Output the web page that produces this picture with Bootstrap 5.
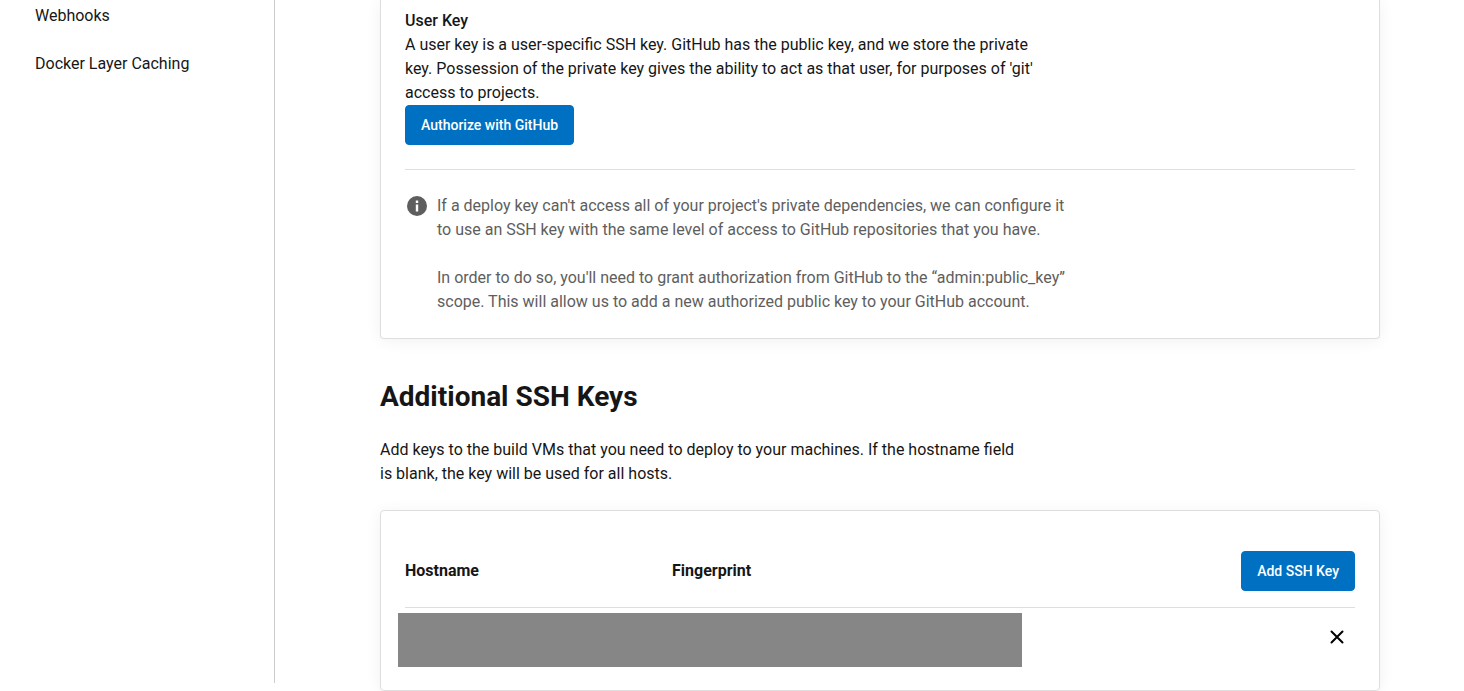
<!DOCTYPE html>
<html lang="en">
<head>
<meta charset="utf-8">
<meta name="viewport" content="width=device-width, initial-scale=1">
<title>Project Settings - SSH Keys</title>
<link href="https://cdn.jsdelivr.net/npm/bootstrap@5.3.0/dist/css/bootstrap.min.css" rel="stylesheet">
<style>
  body { font-family: Roboto, "Liberation Sans", sans-serif; font-size: 16px; line-height: 24px; color: #161616; background: #fff; }
  .sidebar { width: 275px; border-right: 1px solid #ccc; padding: 4px 24px 0 35px; }
  .sidebar a { color: #161616; text-decoration: none; }
  .settings-main { padding: 0 84px 0 105px; min-width: 0; }
  .panel { border: 1px solid #dedede; border-radius: 4px; box-shadow: 0 2px 16px rgba(0, 0, 0, .06); padding: 24px; background: #fff; }
  .panel-continued { border-top: 0; border-top-left-radius: 0; border-top-right-radius: 0; padding-top: 9px; }
  .copy { max-width: 640px; }
  .copy-title { font-size: 16px; line-height: 24px; font-weight: 500; }
  .note { border-top: 1px solid #dedede; color: #5e5e5e; }
  .section-title { font-size: 28px; line-height: 36px; font-weight: 700; margin: 40px 0 23px; }
  .btn-action { --bs-btn-color: #fff; --bs-btn-bg: #0070c2; --bs-btn-border-color: #0070c2; --bs-btn-hover-color: #fff; --bs-btn-hover-bg: #005fa6; --bs-btn-hover-border-color: #005fa6; --bs-btn-font-size: 14px; --bs-btn-font-weight: 500; --bs-btn-padding-x: 15px; --bs-btn-padding-y: 0; --bs-btn-border-radius: 4px; height: 40px; }
  .keys { width: 100%; table-layout: fixed; border-collapse: separate; border-spacing: 0; }
  .keys th { height: 73px; padding: 0; font-weight: 700; border-bottom: 1px solid #dedede; }
  .keys td { height: 58px; padding: 0; }
  .col-host { width: 267px; }
  .col-action { width: 130px; }
  .redacted { left: -7px; top: 5px; width: 624px; height: 54px; background: #868686; }
</style>
</head>
<body>
<div class="d-flex">
  <nav class="sidebar flex-shrink-0 mb-2" aria-label="Project settings">
    <ul class="list-unstyled d-flex flex-column gap-4 mb-0">
      <li><a href="#webhooks">Webhooks</a></li>
      <li><a href="#caching">Docker Layer Caching</a></li>
    </ul>
  </nav>
  <main class="settings-main flex-grow-1">
    <section class="panel panel-continued">
      <div class="copy">
        <h2 class="copy-title mb-0">User Key</h2>
        <p class="mb-0">A user key is a user-specific SSH key. GitHub has the public key, and we store the private key. Possession of the private key gives the ability to act as that user, for purposes of 'git' access to projects.</p>
      </div>
      <button type="button" class="btn btn-action d-block">Authorize with GitHub</button>
      <div class="note d-flex gap-2 mt-4 pt-4">
        <svg class="flex-shrink-0" width="24" height="24" viewBox="0 0 24 24" aria-hidden="true">
          <circle cx="12" cy="12" r="10" fill="#5e5e5e"/>
          <path d="M10.800 6.500h2.400v2.400h-2.400zM10.800 10.500h2.400v7h-2.400z" fill="#fff"/>
        </svg>
        <div class="copy">
          <p class="mb-4">If a deploy key can't access all of your project's private dependencies, we can configure it to use an SSH key with the same level of access to GitHub repositories that you have.</p>
          <p class="mb-0">In order to do so, you'll need to grant authorization from GitHub to the “admin:public_key” scope. This will allow us to add a new authorized public key to your GitHub account.</p>
        </div>
      </div>
    </section>

    <h1 class="section-title">Additional SSH Keys</h1>
    <p class="copy mb-4">Add keys to the build VMs that you need to deploy to your machines. If the hostname field is blank, the key will be used for all hosts.</p>

    <section class="panel">
      <table class="keys">
        <thead>
          <tr>
            <th class="col-host" scope="col">Hostname</th>
            <th scope="col">Fingerprint</th>
            <th class="col-action text-end" scope="col"><button type="button" class="btn btn-action">Add SSH Key</button></th>
          </tr>
        </thead>
        <tbody>
          <tr>
            <td class="position-relative" colspan="2"><div class="redacted position-absolute"></div></td>
            <td class="text-end">
              <button type="button" class="btn border-0 p-2 lh-1" aria-label="Remove key">
                <svg class="d-block" width="20" height="20" viewBox="0 0 20 20" fill="none" stroke="#000" stroke-width="2" stroke-linecap="round" aria-hidden="true"><path d="M4.500 4.500l11 11M15.500 4.500l-11 11"/></svg>
              </button>
            </td>
          </tr>
        </tbody>
      </table>
    </section>
  </main>
</div>
<script src="https://cdn.jsdelivr.net/npm/bootstrap@5.3.0/dist/js/bootstrap.bundle.min.js"></script>
</body>
</html>
